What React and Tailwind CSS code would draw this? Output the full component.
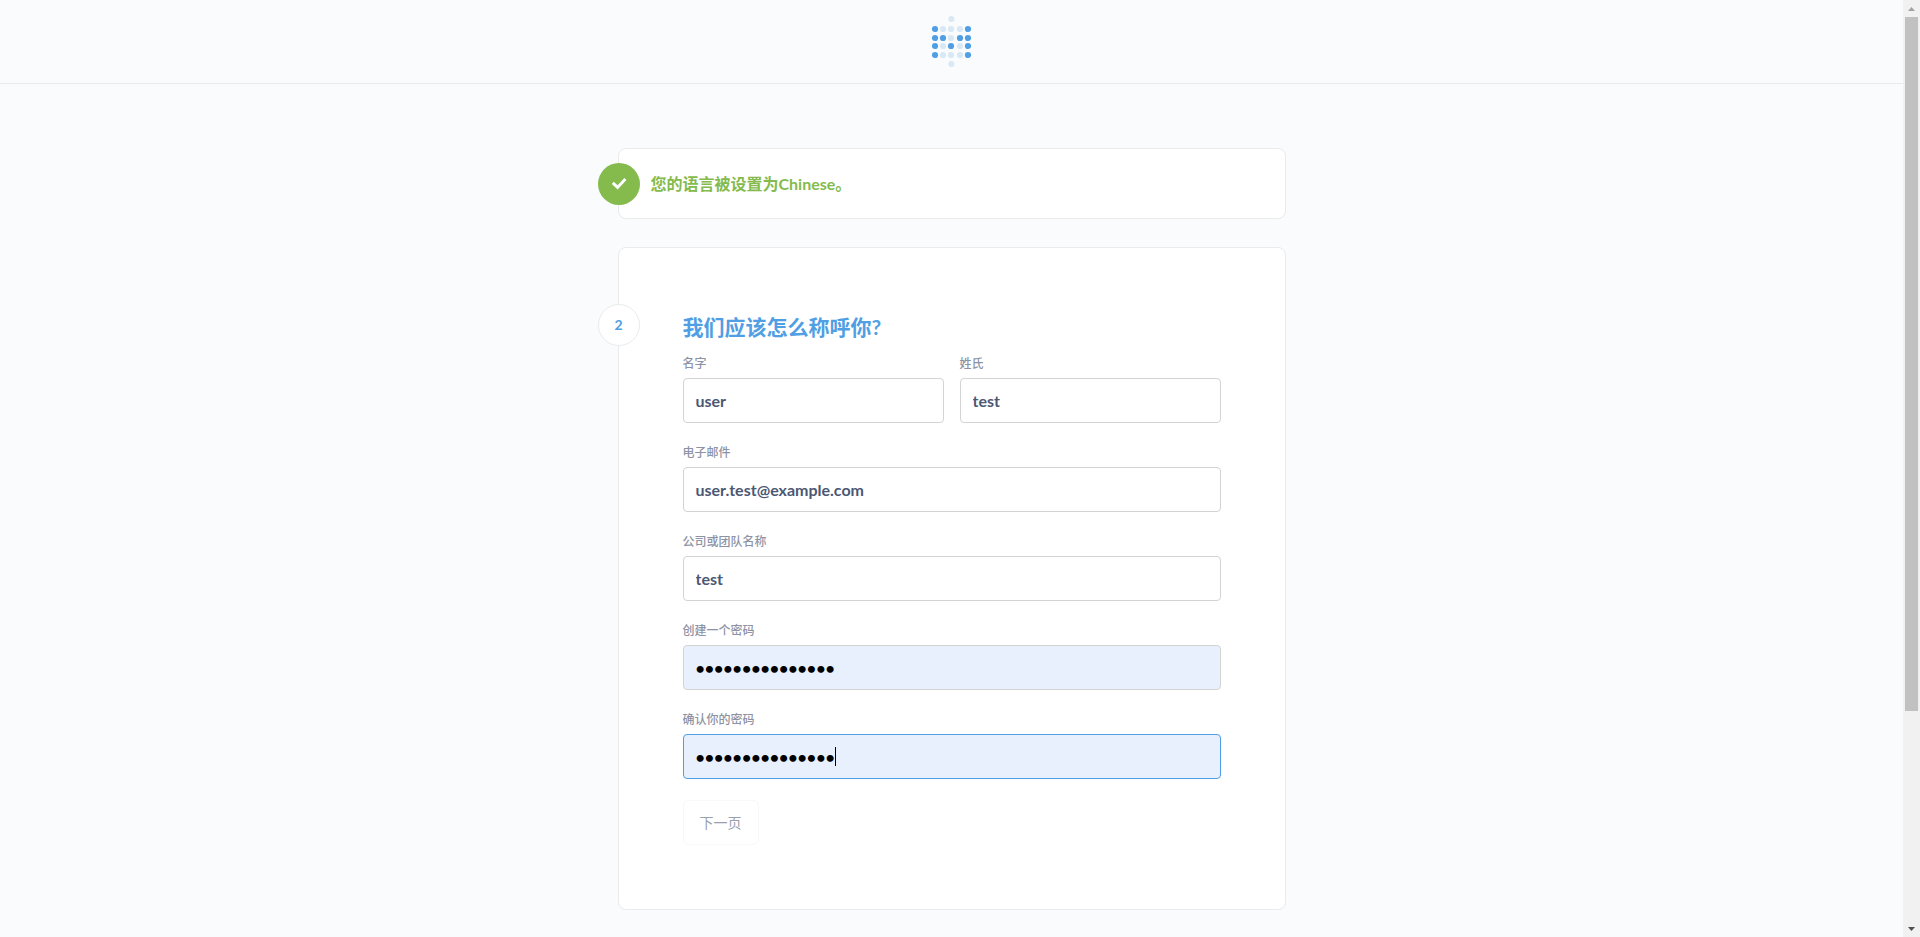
import { useState } from "react";

const DOT_COLUMNS = [3, 11, 19, 28, 36];
const DOT_ROWS = [13, 22, 30, 39];
const DOT_PATTERN = ["10001", "11011", "10101", "10001"];

function Logo() {
  return (
    <svg width="39" height="51" viewBox="0 0 39 51" role="img" aria-label="Logo">
      <circle cx="19.4" cy="3" r="3" fill="#d9e8f5" />
      {DOT_ROWS.map((cy, row) =>
        DOT_COLUMNS.map((cx, col) => (
          <circle
            key={`${row}-${col}`}
            cx={cx}
            cy={cy}
            r="3.1"
            fill={DOT_PATTERN[row][col] === "1" ? "#509ee3" : "#d9e8f5"}
          />
        ))
      )}
      <circle cx="19.4" cy="48" r="3" fill="#d9e8f5" />
    </svg>
  );
}

function CheckIcon() {
  return (
    <svg width="16" height="16" viewBox="0 0 16 16" fill="none" aria-hidden="true">
      <path d="M1.8 6.9 L6.6 11.4 L14.4 3.1" stroke="white" strokeWidth="2.9" />
    </svg>
  );
}

function StepBadge({ className, children }) {
  return (
    <div
      className={`absolute -left-[21px] flex size-[42px] items-center justify-center rounded-full ${className}`}
    >
      {children}
    </div>
  );
}

function Field({ id, label, type = "text", initial, filled, active }) {
  const [value, setValue] = useState(initial);
  const border = active ? "border-[#509ee3]" : "border-[#d3d3d3]";
  const fill = filled ? "bg-[#e8f0fe] text-black" : "bg-white text-[#4c5773]";
  return (
    <div className="flex min-w-0 flex-col">
      <label htmlFor={id} className="mb-[5px] text-xs leading-[18px] font-medium text-[#8d93a5]">
        {label}
      </label>
      <div className="relative">
        <input
          id={id}
          type={type}
          value={value}
          onChange={(event) => setValue(event.target.value)}
          className={`h-[45px] w-full rounded border px-3 text-base font-bold outline-none ${border} ${fill}`}
        />
        {active && (
          <span aria-hidden="true" className="absolute top-[13px] left-[152px] h-[19px] w-px bg-black" />
        )}
      </div>
    </div>
  );
}

function Scrollbar() {
  return (
    <div aria-hidden="true" className="flex w-[17px] shrink-0 flex-col bg-[#f1f1f1]">
      <div className="flex h-[17px] shrink-0 items-center justify-center">
        <svg width="7" height="4" viewBox="0 0 7 4">
          <path d="M0 4 L3.5 0 L7 4 Z" fill="#a3a3a3" />
        </svg>
      </div>
      <div className="flex-1 px-0.5">
        <div className="h-[76.8%] bg-[#c1c1c1]" />
      </div>
      <div className="flex h-[17px] shrink-0 items-center justify-center">
        <svg width="7" height="4" viewBox="0 0 7 4">
          <path d="M0 0 L3.5 4 L7 0 Z" fill="#505050" />
        </svg>
      </div>
    </div>
  );
}

export default function App() {
  return (
    <div className="flex h-screen overflow-hidden bg-[#f9fbfc] font-['Lato','Noto_Sans_CJK_SC',sans-serif]">
      <div className="min-w-0 flex-1 overflow-hidden">
        <header className="flex h-[84px] items-center justify-center border-b border-[#e8eaed]">
          <Logo />
        </header>
        <main className="mx-auto flex max-w-[668px] flex-col gap-7 pt-16">
          <section className="relative flex h-[71px] items-center rounded-lg border border-[#e9ebed] bg-white pl-8">
            <StepBadge className="bg-[#84bb4c]">
              <CheckIcon />
            </StepBadge>
            <p className="text-base font-bold text-[#84bb4c]">您的语言被设置为Chinese。</p>
          </section>
          <section className="relative rounded-lg border border-[#e9ebed] bg-white p-16">
            <StepBadge className="top-14 border border-[#e9ebed] bg-white text-sm font-bold text-[#509ee3]">
              2
            </StepBadge>
            <h2 className="mb-[13px] text-[21px] leading-[30px] font-bold text-[#509ee3]">
              我们应该怎么称呼你?
            </h2>
            <form className="flex flex-col gap-[21px]" onSubmit={(event) => event.preventDefault()}>
              <div className="grid grid-cols-2 gap-4">
                <Field id="first-name" label="名字" initial="user" />
                <Field id="last-name" label="姓氏" initial="test" />
              </div>
              <Field id="email" label="电子邮件" initial="user.test@example.com" />
              <Field id="company" label="公司或团队名称" initial="test" />
              <Field id="password" label="创建一个密码" type="password" initial="examplepassword" filled />
              <Field
                id="confirm-password"
                label="确认你的密码"
                type="password"
                initial="examplepassword"
                filled
                active
              />
              <button
                type="submit"
                className="h-[45px] self-start rounded-md border border-[#f7f8f9] bg-white px-4 text-sm font-normal text-[#9a9fae]"
              >
                下一页
              </button>
            </form>
          </section>
        </main>
      </div>
      <Scrollbar />
    </div>
  );
}
